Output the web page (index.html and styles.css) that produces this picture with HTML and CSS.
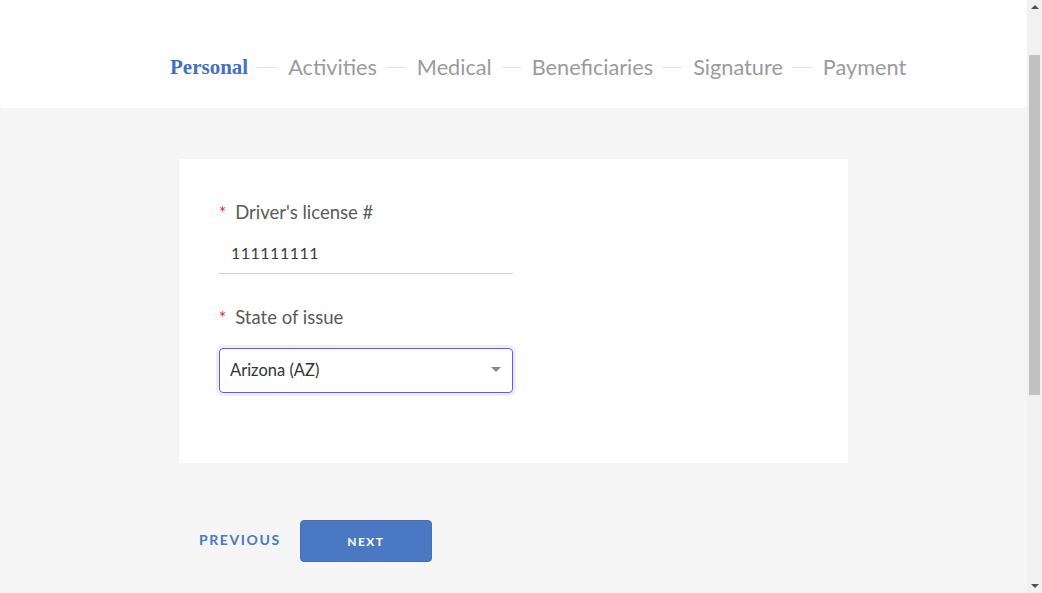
FILE: index.html
```html
<!DOCTYPE html>
<html lang="en">
<head>
<meta charset="utf-8">
<title>Application - Personal</title>
<link rel="stylesheet" href="styles.css">
</head>
<body>
<div class="page">
  <header class="header">
    <nav class="stepper">
      <span class="step step-active">Personal</span>
      <span class="dash"></span>
      <span class="step">Activities</span>
      <span class="dash"></span>
      <span class="step">Medical</span>
      <span class="dash"></span>
      <span class="step">Beneficiaries</span>
      <span class="dash"></span>
      <span class="step">Signature</span>
      <span class="dash"></span>
      <span class="step">Payment</span>
    </nav>
  </header>
  <main class="main">
    <section class="card">
      <div class="field">
        <label class="label"><span class="req">*</span>Driver's license #</label>
        <div class="input">111111111</div>
      </div>
      <div class="field field-2">
        <label class="label"><span class="req">*</span>State of issue</label>
        <div class="select">
          <span>Arizona (AZ)</span>
          <span class="caret"></span>
        </div>
      </div>
    </section>
    <div class="actions">
      <button class="btn-prev">PREVIOUS</button>
      <button class="btn-next">NEXT</button>
    </div>
  </main>
</div>
<div class="scrollbar">
  <span class="arrow arrow-up"></span>
  <div class="track"><div class="thumb"></div></div>
  <span class="arrow arrow-down"></span>
</div>
</body>
</html>
```
FILE: styles.css
```css
html, body {
  margin: 0;
  padding: 0;
}
body {
  background: #f5f5f5;
  font-family: "Lato", "Open Sans", sans-serif;
  color: #555;
  overflow: hidden;
  height: 593px;
}
.page {
  width: 1027px;
}
.header {
  background: #fff;
  height: 108px;
  box-sizing: border-box;
  padding-top: 52px;
  border-radius: 0 0 4px 4px;
}
.stepper {
  display: flex;
  align-items: center;
  height: 30px;
  padding-left: 170px;
}
.step {
  font-size: 21.7px;
  color: #9b9b9b;
  line-height: 30px;
}
.step-active {
  font-family: "Liberation Serif", serif;
  font-weight: bold;
  font-size: 21px;
  color: #4470c3;
}
.dash {
  width: 20px;
  height: 1px;
  background: #e3e3e3;
  margin: 0 11px 0 9px;
}
.main {
  padding: 51px 0 0 179px;
}
.card {
  width: 669px;
  height: 304px;
  box-sizing: border-box;
  background: #fff;
  padding: 41px 40px 0 40px;
}
.label {
  display: block;
  font-size: 18.5px;
  line-height: 24px;
  color: #5a5a5a;
}
.req {
  color: #e8242e;
  font-size: 17px;
  margin-right: 9px;
}
.input {
  margin-top: 8px;
  width: 294px;
  height: 41px;
  box-sizing: border-box;
  border-bottom: 1px solid #cfcfcf;
  padding-left: 12px;
  font-size: 16px;
  line-height: 39px;
  color: #3a3a3a;
  letter-spacing: 0.5px;
}
.field-2 {
  margin-top: 31px;
}
.field-2 .label {
  margin-bottom: 18px;
}
.select {
  width: 294px;
  height: 45px;
  box-sizing: border-box;
  border: 1px solid #5b5cf0;
  border-radius: 4px;
  box-shadow: 0 0 0 3px rgba(110, 110, 255, 0.12);
  display: flex;
  align-items: center;
  justify-content: space-between;
  padding: 0 11px 2px 10px;
  font-size: 16.5px;
  color: #333;
}
.caret {
  width: 0;
  height: 0;
  border-left: 5px solid transparent;
  border-right: 5px solid transparent;
  border-top: 5px solid #8a8a8a;
}
.actions {
  display: flex;
  align-items: center;
  margin-top: 57px;
}
.btn-prev {
  background: none;
  border: none;
  height: 42px;
  padding: 0 19px 4px 20px;
  font-family: inherit;
  font-weight: bold;
  font-size: 14px;
  letter-spacing: 1.6px;
  color: #4a78c6;
}
.btn-next {
  width: 132px;
  height: 42px;
  border: 1px solid #4570bf;
  border-radius: 4px;
  background: #4a78c3;
  color: #fff;
  font-family: inherit;
  font-weight: bold;
  font-size: 12px;
  letter-spacing: 1.4px;
}
.scrollbar {
  position: fixed;
  top: 0;
  right: 0;
  width: 15px;
  height: 593px;
  background: #f1f1f1;
  display: flex;
  flex-direction: column;
  align-items: center;
}
.arrow {
  width: 0;
  height: 0;
  border-left: 4px solid transparent;
  border-right: 4px solid transparent;
  margin: 5px 0;
}
.arrow-up {
  border-bottom: 4px solid #505050;
}
.arrow-down {
  border-top: 4px solid #505050;
}
.track {
  flex: 1;
  width: 100%;
  padding-top: 41px;
  box-sizing: border-box;
  display: flex;
  justify-content: center;
}
.thumb {
  width: 11px;
  height: 340px;
  background: #c1c1c1;
}
```
